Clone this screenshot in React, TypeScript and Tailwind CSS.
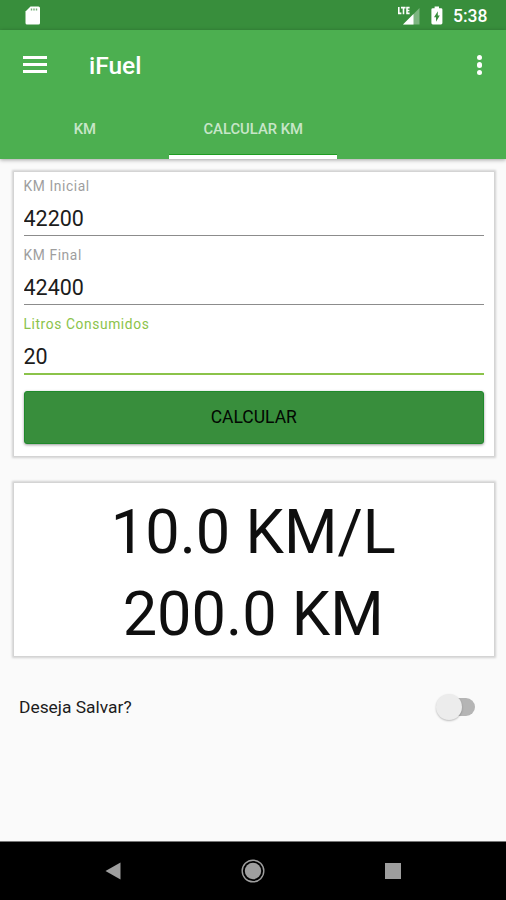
import React, { useState } from 'react'

interface FieldProps {
  label: string
  value: string
  focused?: boolean
  onChange: (value: string) => void
}

function StatusBar() {
  return (
    <div className="flex h-[30px] items-center justify-between bg-[#388e3c] pl-[25px] pr-[19px]">
      <svg className="h-[19px] w-[16px]" viewBox="0 0 16 19">
        <path fill="#fff" d="M5.5 0.5H13.5A1.5 1.5 0 0 1 15 2V17A1.5 1.5 0 0 1 13.5 18.5H2A1.5 1.5 0 0 1 0.5 17V5.5Z" />
        <path stroke="#388e3c" strokeWidth="1.4" opacity="0.7" d="M6.5 2.4v2M9 2.4v2M11.5 2.4v2" />
      </svg>
      <div className="flex items-center">
        <svg className="h-[20px] w-[23px]" viewBox="0 0 23 20">
          <path fill="#fff" fillOpacity="0.35" d="M22.5 3V19.5H6Z" />
          <path fill="#fff" d="M16.5 9V19.5H6Z" />
          <path fill="none" stroke="#fff" strokeWidth="1.6" d="M1.8 2v6.4h2.6M4 2.6h4.6M6.5 2.6v6.6M12.6 2.6H10v5.8h2.6M10 5.5h2.4" />
        </svg>
        <svg className="ml-[11px] h-[19px] w-[12px]" viewBox="0 0 12 19">
          <path fill="#fff" d="M3.6 0.5h4.4v1.7h2a1.4 1.4 0 0 1 1.4 1.4v13.5a1.4 1.4 0 0 1-1.4 1.4H1.8a1.4 1.4 0 0 1-1.4-1.4V3.6a1.4 1.4 0 0 1 1.4-1.4h1.8Z" />
          <path fill="#388e3c" d="M6.8 5.3v4.3h2L5 15.8v-4.5H3Z" />
        </svg>
        <span className="ml-[10px] w-[34px] whitespace-nowrap pt-[2px] text-[17.5px] font-medium leading-[30px] text-white">5:38</span>
      </div>
    </div>
  )
}

function Field({ label, value, focused = false, onChange }: FieldProps) {
  return (
    <label className="block h-[69px]">
      <span className={`block h-[20px] text-[13.8px] leading-[21px] tracking-[0.6px] ${focused ? 'text-[#8bc34a]' : 'text-[#9e9e9e]'}`}>
        {label}
      </span>
      <input
        type="text"
        value={value}
        onChange={(e) => onChange(e.target.value)}
        className={`block w-full bg-transparent p-0 pt-[9px] text-[21.5px] leading-[26px] text-[#1c1c1c] outline-none ${
          focused ? 'h-[41px] border-b-2 border-[#8bc34a] pb-[4px]' : 'h-[40px] border-b border-[#8c8c8c] pb-[4px]'
        }`}
      />
    </label>
  )
}

export default function App() {
  const [inicial, setInicial] = useState('42200')
  const [final, setFinal] = useState('42400')
  const [litros, setLitros] = useState('20')
  const [result, setResult] = useState({ media: '10.0', distancia: '200.0' })
  const [salvar, setSalvar] = useState(false)

  const calcular = () => {
    const distancia = Number(final) - Number(inicial)
    const media = distancia / Number(litros)
    if (!Number.isFinite(media)) return
    setResult({ media: media.toFixed(1), distancia: distancia.toFixed(1) })
  }

  return (
    <div className="flex h-[900px] w-[506px] flex-col overflow-hidden bg-[#fafafa] font-['Roboto',sans-serif]">
      <StatusBar />

      {/* Toolbar and tabs */}
      <header className="flex h-[128.5px] flex-col bg-[#4caf50] text-white shadow-[0_1px_4px_rgba(0,0,0,0.35)]">
        <div className="flex h-[70px] items-center pl-[23px] pr-[24px]">
          <button className="-mt-[1px] flex w-[23.5px] flex-col gap-[4px]" aria-label="Menu">
            <span className="h-[3px] w-full bg-white" />
            <span className="h-[3px] w-full bg-white" />
            <span className="h-[3px] w-full bg-white" />
          </button>
          <h1 className="ml-[42.5px] pt-[1px] text-[24.5px] font-medium leading-[30px]">iFuel</h1>
          <button className="ml-auto flex flex-col gap-[2px]" aria-label="Mais">
            <span className="size-[5.4px] rounded-full bg-white" />
            <span className="size-[5.4px] rounded-full bg-white" />
            <span className="size-[5.4px] rounded-full bg-white" />
          </button>
        </div>
        <nav className="grid h-[58.5px] grid-cols-3 text-center text-[14.8px] font-medium leading-[59px] text-white/70">
          <span className="pl-[1px]">KM</span>
          <span className="flex h-[58.5px] flex-col pl-[0.5px]">
            <span className="h-[54px]">CALCULAR KM</span>
            <span className="h-[4.5px] border-t-[1.5px] border-[#1f9c22] bg-white" />
          </span>
        </nav>
      </header>

      <main className="flex flex-1 flex-col pl-[14px] pr-[12.5px] pt-[13.5px]">
        <section className="h-[284px] bg-white px-[9.5px] pt-[4px] shadow-[0_0_2px_2px_rgba(0,0,0,0.16)]">
          <Field label="KM Inicial" value={inicial} onChange={setInicial} />
          <Field label="KM Final" value={final} onChange={setFinal} />
          <Field label="Litros Consumidos" value={litros} onChange={setLitros} focused />
          <button
            onClick={calcular}
            className="mt-[8px] block h-[53px] w-full rounded-[3px] border border-[#1f8a2b] bg-[#388e3c] text-[17.5px] leading-[51px] text-[#020802] shadow-[0_1px_3px_rgba(0,0,0,0.4)]"
          >
            CALCULAR
          </button>
        </section>

        <section className="mt-[27px] h-[173px] bg-white pr-[1px] pt-[8px] text-center text-[61.3px] leading-[82px] text-[#0f0f0f] shadow-[0_0_2px_2px_rgba(0,0,0,0.16)]">
          <p>{result.media} KM/L</p>
          <p>{result.distancia} KM</p>
        </section>

        <div className="mt-[38px] flex h-[26px] items-center justify-between pl-[5px] pr-[19px]">
          <span className="text-[17.4px] text-[#1c1c1c]">Deseja Salvar?</span>
          <button
            role="switch"
            aria-checked={salvar}
            onClick={() => setSalvar(!salvar)}
            className="flex h-[18px] w-[37px] items-center rounded-full bg-[#b5b5b5]"
          >
            <span className={`size-[26px] rounded-full bg-[#ececec] shadow-[0_1px_2px_rgba(0,0,0,0.25)] ${salvar ? 'ml-auto' : '-ml-[2px]'}`} />
          </button>
        </div>
      </main>

      {/* Android navigation */}
      <footer className="grid h-[59px] grid-cols-[1fr_24px_1fr] items-center border-t border-[#777] bg-black px-[104px]">
        <svg className="h-[18px] w-[17px]" viewBox="0 0 17 18">
          <path fill="#9e9e9e" d="M16.5 0.5V17.5L1.5 9Z" />
        </svg>
        <svg className="size-[24px]" viewBox="0 0 24 24">
          <circle cx="12" cy="12" r="10.8" fill="none" stroke="#9e9e9e" strokeWidth="1.4" />
          <circle cx="12" cy="12" r="8.2" fill="#9e9e9e" />
        </svg>
        <span className="mr-[1px] size-[16px] justify-self-end bg-[#9e9e9e]" />
      </footer>
    </div>
  )
}
